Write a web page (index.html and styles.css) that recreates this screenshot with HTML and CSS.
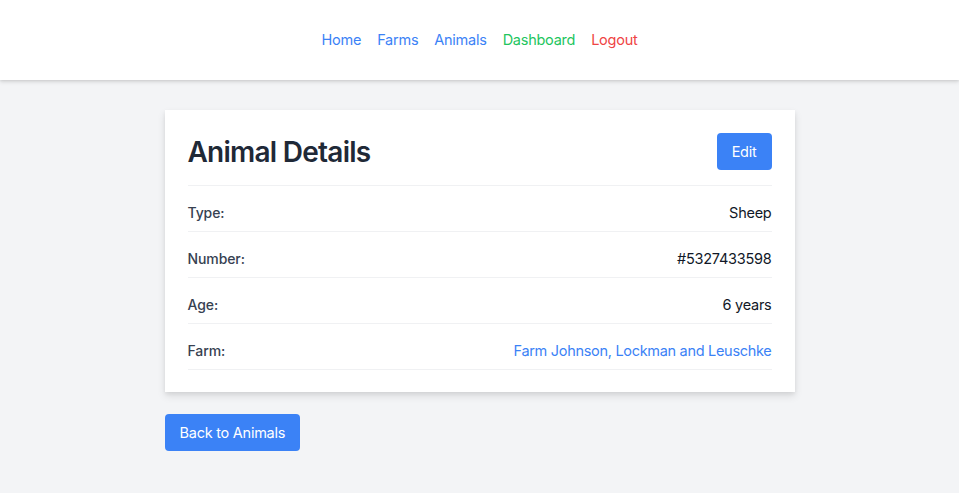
FILE: index.html
```html
<!DOCTYPE html>
<html lang="en">
<head>
<meta charset="utf-8">
<title>Animal Details</title>
<link rel="stylesheet" href="styles.css">
</head>
<body>
<nav class="topnav">
  <a class="nav-link blue" href="#">Home</a>
  <a class="nav-link blue" href="#">Farms</a>
  <a class="nav-link blue" href="#">Animals</a>
  <a class="nav-link green" href="#">Dashboard</a>
  <a class="nav-link red" href="#">Logout</a>
</nav>
<main class="container">
  <section class="card">
    <div class="card-header">
      <h1 class="title">Animal Details</h1>
      <a class="btn" href="#">Edit</a>
    </div>
    <div class="row"><span class="label">Type:</span><span class="value">Sheep</span></div>
    <div class="row"><span class="label">Number:</span><span class="value">#5327433598</span></div>
    <div class="row"><span class="label">Age:</span><span class="value">6 years</span></div>
    <div class="row"><span class="label">Farm:</span><a class="value link" href="#">Farm Johnson, Lockman and Leuschke</a></div>
  </section>
  <div class="actions">
    <a class="btn" href="#">Back to Animals</a>
  </div>
</main>
</body>
</html>
```
FILE: styles.css
```css
* { box-sizing: border-box; }
html, body { margin: 0; padding: 0; }
body {
  background: #f3f4f6;
  font-family: "Inter", "Noto Sans", sans-serif;
  font-size: 14.5px;
  letter-spacing: -0.25px;
  color: #111827;
  min-height: 493px;
}
a { text-decoration: none; }
.topnav {
  height: 80px;
  background: #ffffff;
  box-shadow: 0 2px 4px rgba(0,0,0,0.12), 0 1px 2px rgba(0,0,0,0.06);
  display: flex;
  justify-content: center;
  align-items: center;
  gap: 16px;
}
.nav-link { font-size: 14.5px; line-height: 20px; }
.blue { color: #3b82f6; }
.green { color: #22c55e; }
.red { color: #ef4444; }
.container {
  width: 630px;
  margin: 30px auto 0;
}
.card {
  background: #ffffff;
  padding: 23px 23px 22px;
  box-shadow: 0 4px 8px rgba(0,0,0,0.1), 0 2px 4px rgba(0,0,0,0.06);
}
.card-header {
  display: flex;
  justify-content: space-between;
  align-items: center;
  padding-bottom: 15px;
  border-bottom: 1px solid #f0f1f3;
}
.title {
  margin: 0;
  font-size: 28px;
  line-height: 36px;
  font-weight: 600;
  letter-spacing: -0.75px;
  color: #1f2937;
}
.btn {
  display: inline-block;
  background: #3b82f6;
  color: #ffffff;
  font-size: 14.5px;
  line-height: 21px;
  padding: 8px 15px;
  border-radius: 4px;
}
.row {
  display: flex;
  justify-content: space-between;
  align-items: center;
  padding: 15px 0 6px;
  line-height: 24px;
  border-bottom: 1px solid #f0f1f3;
}
.label { font-weight: 500; color: #374151; font-size: 14px; letter-spacing: -0.1px; }
.value { color: #111827; font-size: 14.5px; }
.link { color: #3b82f6; letter-spacing: -0.3px; }
.actions { margin-top: 22px; }
```
